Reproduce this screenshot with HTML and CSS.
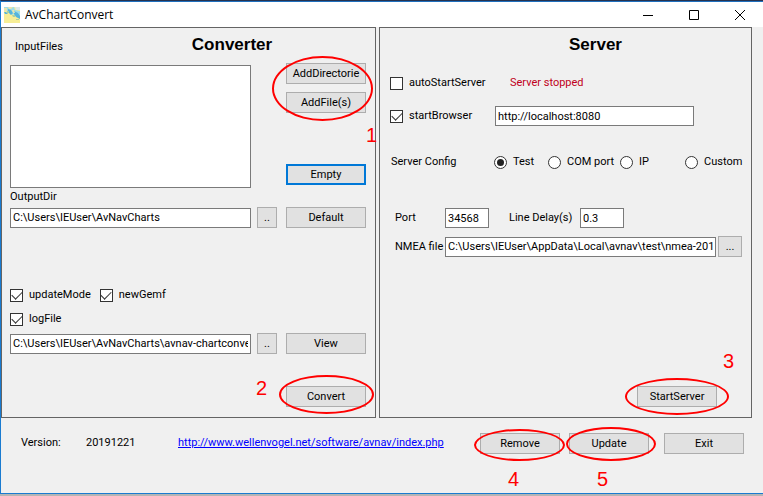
FILE: index.html
```html
<!DOCTYPE html>
<html lang="en">
<head>
<meta charset="utf-8">
<title>AvChartConvert</title>
<link rel="stylesheet" href="styles.css">
</head>
<body>
<div class="window">
  <header class="titlebar">
    <svg class="app-icon" viewBox="0 0 16 16" aria-hidden="true">
      <path fill="#f7ee96" d="M0 0h16v16H0z"/>
      <path fill="#9fdce6" d="M0 0h10l1 3 5 1v7l-3-1-3-3-2 1-2-2-3-1-1-2H0z"/>
      <path fill="#55b5dc" d="M4 2l3 1 2 3-2 2-3-3zM10 4l4 2 2 3v3l-4-2-2-3zM0 5h2l2 2H1z"/>
      <path fill="#e8e6b0" d="M4 0h5l-2 2H5zM0 1h3v3H0zM8 3h2l1 3H9z"/>
      <path fill="#a9cfa3" d="M3 4h2v2H3zM8 8h3v2H9zM12 12h3v1h-3z"/>
      <path fill="#dce9ea" d="M11 0h5v3h-4z"/>
    </svg>
    <span class="app-name">AvChartConvert</span>
    <button class="caption" aria-label="Minimize"><svg viewBox="0 0 10 10"><path d="M0 5.5h10"/></svg></button>
    <button class="caption" aria-label="Maximize"><svg viewBox="0 0 10 10"><path d="M.5.5h9v9h-9z"/></svg></button>
    <button class="caption" aria-label="Close"><svg viewBox="0 0 10 10"><path d="M0 0l10 10M10 0L0 10"/></svg></button>
  </header>

  <main class="panels">
    <section class="panel converter">
      <div class="panel-head">
        <label for="files">InputFiles</label>
        <h2>Converter</h2>
      </div>
      <div class="files-row">
        <select id="files" class="files" size="6"></select>
        <div class="file-actions">
          <div class="marked add-group">
            <button class="btn">AddDirectorie</button>
            <button class="btn">AddFile(s)</button>
            <span class="ring ring-add"></span><span class="num num-add">1</span>
          </div>
          <button class="btn focused">Empty</button>
        </div>
      </div>
      <label class="output-label" for="output">OutputDir</label>
      <div class="path-row">
        <input id="output" class="field" type="text" value="C:\Users\IEUser\AvNavCharts">
        <button class="btn small" aria-label="Browse output">..</button>
        <button class="btn">Default</button>
      </div>
      <div class="checks">
        <label class="option"><input type="checkbox" checked>updateMode</label>
        <label class="option"><input type="checkbox" checked>newGemf</label>
      </div>
      <label class="option log-option"><input type="checkbox" checked>logFile</label>
      <div class="path-row">
        <input class="field" type="text" aria-label="Log file" value="C:\Users\IEUser\AvNavCharts\avnav-chartconvert.log">
        <button class="btn small" aria-label="Browse log">..</button>
        <button class="btn">View</button>
      </div>
      <div class="marked convert">
        <button class="btn">Convert</button>
        <span class="ring ring-convert"></span><span class="num num-convert">2</span>
      </div>
    </section>

    <section class="panel server">
      <h2>Server</h2>
      <div class="server-row">
        <label class="option"><input type="checkbox">autoStartServer</label>
        <span class="status">Server stopped</span>
      </div>
      <div class="server-row browser-row">
        <label class="option"><input type="checkbox" checked>startBrowser</label>
        <input class="field url" type="text" aria-label="Browser address" value="http://localhost:8080">
      </div>
      <div class="config-row" role="radiogroup" aria-label="Server Config">
        <span>Server Config</span>
        <label class="option"><input type="radio" name="source" checked>Test</label>
        <label class="option"><input type="radio" name="source">COM port</label>
        <label class="option"><input type="radio" name="source">IP</label>
        <label class="option"><input type="radio" name="source">Custom</label>
      </div>
      <div class="source-row port-row">
        <label for="port">Port</label>
        <input id="port" class="field number" type="text" value="34568">
        <label class="delay" for="delay">Line Delay(s)</label>
        <input id="delay" class="field number" type="text" value="0.3">
      </div>
      <div class="source-row">
        <label for="nmea">NMEA file</label>
        <input id="nmea" class="field nmea" type="text" value="C:\Users\IEUser\AppData\Local\avnav\test\nmea-20130630.log">
        <button class="btn browse" aria-label="Browse NMEA file">...</button>
      </div>
      <div class="marked start">
        <button class="btn">StartServer</button>
        <span class="ring ring-start"></span><span class="num num-start">3</span>
      </div>
    </section>
  </main>

  <footer class="footer">
    <span class="version">Version:</span>
    <span class="build">20191221</span>
    <a href="http://www.wellenvogel.net/software/avnav/index.php">http://www.wellenvogel.net/software/avnav/index.php</a>
    <div class="footer-actions">
      <div class="marked">
        <button class="btn">Remove</button>
        <span class="ring ring-remove"></span><span class="num num-below">4</span>
      </div>
      <div class="marked">
        <button class="btn">Update</button>
        <span class="ring ring-update"></span><span class="num num-below">5</span>
      </div>
      <button class="btn exit">Exit</button>
    </div>
  </footer>
</div>
</body>
</html>
```
FILE: styles.css
```css
* { box-sizing: border-box; }
body {
  margin: 0;
  background: #b5b5b5;
  color: #000;
  font: 11px/16px Roboto, "Liberation Sans", sans-serif;
}
button, input, select { font: inherit; color: inherit; margin: 0; }
h2 {
  margin: 0;
  font: bold 17px/20px "Liberation Sans", sans-serif;
  text-align: center;
}
.window {
  min-height: calc(100vh - 2px);
  display: flex;
  flex-direction: column;
  background: #f0f0f0;
  border: 1px solid #1a7bd0;
  border-right: 0;
  box-shadow: inset 0 1px #1f6fbd;
  border-top-color: #26324f;
}
.titlebar {
  display: flex;
  align-items: center;
  height: 25px;
  margin-top: 1px;
  padding: 0 0 0 3px;
  background: #fff;
  flex: none;
}
.app-icon { width: 16px; height: 16px; }
.app-name { margin: 0 auto 0 5px; font: 12px/16px "Open Sans", sans-serif; }
.caption {
  width: 46px;
  height: 24px;
  padding: 0;
  border: 0;
  background: none;
  display: grid;
  place-items: center;
}
.caption svg { width: 10px; height: 10px; fill: none; stroke: #000; overflow: visible; }

.panels {
  display: grid;
  grid-template-columns: 375fr 373fr;
  gap: 3px;
  margin-right: 11px;
}
.panel { border: 1px solid #646464; min-width: 0; height: 391px; }
.converter { padding: 7px 9px 0 8px; display: flex; flex-direction: column; }
.server { padding: 7px 9px 0 10px; display: flex; flex-direction: column; }
.panel-head {
  display: grid;
  grid-template-columns: 120px 194px 1fr;
  align-items: start;
  padding-left: 5px;
}
.panel-head label { padding-top: 4px; }
.files-row { display: flex; justify-content: space-between; margin-top: 8px; }
.files {
  width: 241px;
  height: 123px;
  margin-top: 2px;
  border: 1px solid #7a7a7a;
  border-radius: 0;
  background: #fff;
  outline: 0;
}
.file-actions { display: flex; flex-direction: column; justify-content: space-between; padding-bottom: 3px; }
.add-group { display: flex; flex-direction: column; gap: 8px; }
.btn {
  width: 80px;
  height: 21px;
  padding: 0;
  border: 1px solid #adadad;
  border-radius: 0;
  background: #e1e1e1;
  flex: none;
}
.btn.focused { border: 2px solid #0078d7; }
.btn.small { width: 20px; margin: 0 9px 0 6px; }
.field {
  height: 20px;
  min-width: 0;
  padding: 0 2px;
  border: 1px solid #7a7a7a;
  border-radius: 0;
  background: #fff;
  outline: 0;
}
.output-label { margin: 1px 0 2px; }
.path-row { display: flex; align-items: center; }
.path-row .field { flex: 1; }
.checks { display: flex; gap: 9px; margin-top: 59px; }
.option { display: flex; align-items: center; gap: 6px; white-space: nowrap; }
.log-option { margin: 8px 0 6px; }
.option input {
  appearance: none;
  width: 13px;
  height: 13px;
  border: 1px solid #333;
  background: #fff;
  display: grid;
  place-items: center;
  flex: none;
}
.option input[type="checkbox"]:checked::before {
  content: "";
  width: 9px;
  height: 5px;
  border: solid #333;
  border-width: 0 0 1px 1px;
  transform: translateY(-1px) rotate(-45deg);
}
.option input[type="radio"] { border-radius: 50%; }
.option input[type="radio"]:checked::before {
  content: "";
  width: 7px;
  height: 7px;
  border-radius: 50%;
  background: #222;
}
.convert { align-self: flex-end; margin-top: 32px; }

.server h2 { margin-right: -59px; }
.server-row { display: grid; grid-template-columns: 105px 1fr; align-items: center; margin-top: 20px; }
.browser-row { margin-top: 15px; }
.server-row .status { color: #c00020; padding-left: 15px; }
.url { width: 199px; }
.config-row {
  display: grid;
  grid-template-columns: 103px 54px 72px 65px auto;
  margin-top: 28px;
  padding-left: 1px;
}
.source-row { display: flex; align-items: center; padding-left: 5px; }
.source-row > label:first-child { width: 50px; white-space: nowrap; }
.port-row { margin: 38px 0 8px; }
.number { width: 44px; }
.delay { width: 71px; margin-left: 20px; }
.nmea { flex: 1; }
.browse { width: 24px; margin-left: 2px; }
.start { align-self: flex-end; margin: auto 25px 10px 0; }

.footer { display: flex; align-items: flex-start; padding: 15px 19px 0 20px; flex: 1; }
.footer > span, .footer > a { margin-top: 2px; }
.version { width: 65px; }
.build { width: 92px; }
.footer a { color: #00f; }
.footer-actions { display: flex; gap: 9px; margin-left: auto; }
.exit { margin-left: 6px; }

.marked { position: relative; display: flex; }
.ring {
  position: absolute;
  border: 2px solid #f00;
  border-radius: 50%;
  pointer-events: none;
}
.num {
  position: absolute;
  color: #f00;
  font: 20px/20px "Liberation Sans", sans-serif;
}
.ring-add { inset: -7px -7px -8px -14px; }
.ring-convert { inset: -11px -8px -7px -7px; }
.ring-start { inset: -8px -12px; }
.ring-remove { inset: -4px -5px -7px -6px; }
.ring-update { inset: -6px -7px -7px -3px; }
.num-add { left: 80px; top: 62px; }
.num-convert { left: -30px; top: -8px; }
.num-start { left: 86px; top: -35px; }
.num-below { left: 28px; top: 36px; }
```
